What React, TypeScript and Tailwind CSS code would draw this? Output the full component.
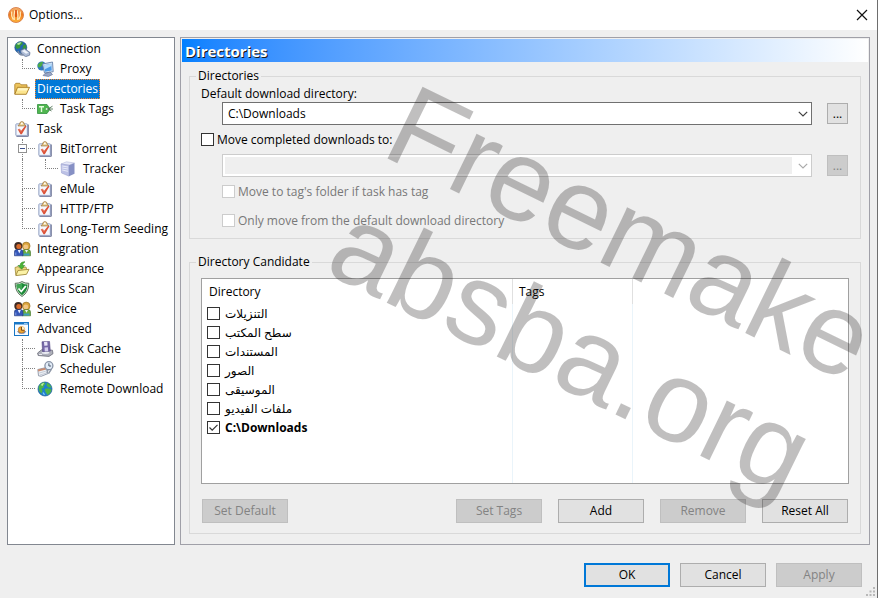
import type { ReactNode } from "react";

const FONT = "font-['Open_Sans','Noto_Sans','DejaVu_Sans',sans-serif]";

function AppLogo() {
  return (
    <svg width="16" height="16" viewBox="0 0 16 16">
      <defs>
        <linearGradient id="logo" x1="0" y1="0" x2="0" y2="1">
          <stop offset="0" stopColor="#f6b877" />
          <stop offset="0.45" stopColor="#ee7a1c" />
          <stop offset="1" stopColor="#ffb63c" />
        </linearGradient>
      </defs>
      <circle cx="8" cy="8" r="7.500" fill="url(#logo)" stroke="#d77b45" strokeWidth="0.9" />
      <path d="M3.700 4.500Q3 9 5.200 12.500M6.800 3.500Q5.500 8 6.300 13M9.200 3.500Q10.500 8 9.700 13M12.300 4.500Q13 9 10.800 12.500" fill="none" stroke="#ffe9b8" strokeWidth="1.300" />
      <path d="M8 3v7" stroke="#d9480f" strokeWidth="1.400" />
    </svg>
  );
}

function ConnectionIcon() {
  return (
    <svg width="17" height="16" viewBox="0 0 17 16">
      <circle cx="6.800" cy="6.500" r="6" fill="#2468b4" stroke="#174a80" strokeWidth="0.6" />
      <path d="M1.500 4Q4 .8 8 1L9 3 6.500 4.500 6 7 3 8 1.500 6zM9 4.500l2.500-1.500 1 3.500-2 3-2-1.500z" fill="#37983c" />
      <path d="M2.500 3Q5 .8 7.500 1.500L5 4z" fill="#b9e8a8" />
      <path d="M6.500 9.500l4-2 5.500 4-.5 2.800-4 1.400L7 12z" fill="#aebcd6" stroke="#56688e" strokeWidth="0.7" />
      <path d="M8 10l2.500-1.200 4 2.900-2.500 1z" fill="#eef3fa" />
      <path d="M4 10q1 4.500 5.500 4" fill="none" stroke="#7d8ba5" strokeWidth="1.400" />
    </svg>
  );
}

function ProxyIcon() {
  return (
    <svg width="17" height="16" viewBox="0 0 17 16">
      <circle cx="4.800" cy="5" r="4.500" fill="#2f78bd" />
      <path d="M.8 3.500Q3 .6 6 .8L5.500 4 3 6.500 1 6z" fill="#4cab44" />
      <path d="M5.500 3l10-2 .7 9.700L7.500 12z" fill="#d5e4f5" stroke="#6582ac" strokeWidth="0.9" />
      <path d="M7 4.200l7.300-1.400.4 6.700-6.700 1.200z" fill="#4d9be8" />
      <path d="M7 4.200l7.300-1.400.1 2.200-7 3.500z" fill="#b5dcfb" />
      <path d="M8 12.500l5-1.500 2.500 2.500-4 2-5.500-1z" fill="#97a6c6" stroke="#5b6c92" strokeWidth="0.6" />
    </svg>
  );
}

function FolderIcon() {
  return (
    <svg width="16" height="16" viewBox="0 0 16 16">
      <path d="M.8 13V3.500l1-1.200h4l1.200 1.500h6V7" fill="#edc45c" stroke="#a77b25" strokeWidth="0.8" />
      <path d="M.8 13.300L3.500 6.300h12l-3.200 7z" fill="#fce58e" stroke="#a77b25" strokeWidth="0.9" />
      <path d="M4.200 7.200h9.800L13 9.500H3.300z" fill="#fff6c5" />
    </svg>
  );
}

function TagIcon() {
  return (
    <svg width="17" height="16" viewBox="0 0 17 16">
      <path d="M.5 3.500h9.500L13 8l-3 4.500H.5z" fill="#4fb64f" stroke="#349040" strokeWidth="0.8" />
      <path d="M2 5.700h5M4.500 5.700V11" stroke="#e6fbe0" strokeWidth="1.400" />
      <circle cx="9.800" cy="8" r="1.100" fill="#f2fff0" />
      <path d="M9.800 8H16M11 8l4.500-2.800M11.500 8.300l3 1.700" fill="none" stroke="#55775a" strokeWidth="0.9" />
    </svg>
  );
}

function TaskIcon() {
  return (
    <svg width="16" height="16" viewBox="0 0 16 16">
      <rect x="1.800" y="2.800" width="11.700" height="12" rx="0.800" fill="#dfe7f6" stroke="#93a0c2" strokeWidth="0.9" />
      <path d="M14.300 3.500V15.300H2.500" fill="none" stroke="#5d678b" strokeWidth="0.900" />
      <rect x="3" y="5" width="9" height="8.500" fill="#f6f8fd" />
      <path d="M4 4.900L5.500 3.200q.3-2.600 2.400-2.600t2.400 2.600l1.500 1.700z" fill="#ecd191" stroke="#9c7640" strokeWidth="0.8" />
      <circle cx="7.900" cy="2.500" r="0.900" fill="#fff" />
      <path d="M3.700 8.300l2-.5 1.500 2 4-5 1.300.4-4.700 8H6.500z" fill="#dc5339" />
      <path d="M4.300 8.600l1.200-.2 1.500 2.200" fill="none" stroke="#f4a08c" strokeWidth="0.600" />
    </svg>
  );
}

function ServerIcon() {
  return (
    <svg width="16" height="16" viewBox="0 0 16 16">
      <path d="M1 3l5.500-2.200L14.500 2 9 4.200z" fill="#e6e8f8" stroke="#a9aed4" strokeWidth="0.5" />
      <path d="M1 3l8 1.200V15.200L1.500 12z" fill="#bcc1e6" stroke="#969dcd" strokeWidth="0.5" />
      <path d="M9 4.200L14.500 2v10.700L9 15.200z" fill="#8690c4" />
      <path d="M2.200 5l5.800 1M2.200 7l5.800 1M2.200 9l5.800 1.300" stroke="#edeffb" strokeWidth="0.9" />
    </svg>
  );
}

function PeopleIcon() {
  return (
    <svg width="17" height="16" viewBox="0 0 17 16">
      <circle cx="12.200" cy="5" r="3.900" fill="#d9a43c" stroke="#8f6a24" strokeWidth="0.600" />
      <circle cx="11.800" cy="6" r="2.400" fill="#f2c684" />
      <path d="M8.500 14.800V11q0-2.300 2-2.300h4q2 0 2 2.300v3.800z" fill="#6cad3f" stroke="#3f7226" strokeWidth="0.600" />
      <path d="M9.500 12.500h6v2h-6z" fill="#3d9fc0" />
      <circle cx="4.300" cy="5" r="4" fill="#3f2a22" />
      <circle cx="4.800" cy="5.600" r="2.500" fill="#d96a2b" />
      <path d="M.4 14.800V11q0-2.300 2-2.300H7q2 0 2 2.300v3.800z" fill="#3557b8" stroke="#22397d" strokeWidth="0.600" />
      <path d="M3.800 9h3l-1.500 3.500zM11 9h3l-1.500 2.800z" fill="#eef2ff" />
      <path d="M1.800 11.500v2.700" stroke="#8ba5ed" strokeWidth="0.9" />
    </svg>
  );
}

function AppearanceIcon() {
  return (
    <svg width="16" height="16" viewBox="0 0 16 16">
      <path d="M1.800 14L1 6.500l3.200-1 1.300 1.500 6.500-1 .7 2.500" fill="#ecd882" stroke="#a08a3a" strokeWidth="0.8" />
      <path d="M1.800 14.600L4 9.500l11-1.200-2.500 5z" fill="#fbf2a6" stroke="#a08a3a" strokeWidth="0.9" />
      <path d="M11 .8Q6 .8 6.200 4.500H4L7.700 8.200l3-3.700H8.500q0-2 2.500-3.700z" fill="#4bb735" stroke="#2f8623" strokeWidth="0.600" />
    </svg>
  );
}

function ShieldIcon() {
  return (
    <svg width="16" height="16" viewBox="0 0 16 16">
      <path d="M8 .6Q11 2.500 14.800 2.300 15 11 8 15.500 1 11 1.200 2.300 5 2.500 8 .6z" fill="#dfe8dd" stroke="#48644b" strokeWidth="0.9" />
      <path d="M8 2.100Q10.500 3.600 13.500 3.600 13.500 10.500 8 14.200 2.500 10.500 2.500 3.600 5.500 3.600 8 2.100z" fill="#1c8a38" />
      <path d="M8 2.100v6H3Q2.500 6 2.500 3.600 5.500 3.600 8 2.100z" fill="#3fa653" />
      <path d="M4.500 7.500l2.800 3L11.800 5" fill="none" stroke="#fff" strokeWidth="1.800" />
    </svg>
  );
}

function AdvancedIcon() {
  return (
    <svg width="16" height="16" viewBox="0 0 16 16">
      <rect x="0.500" y="1.500" width="14" height="13" fill="#f7fbff" stroke="#1976c5" />
      <path d="M1 2.500h13" stroke="#1976c5" strokeWidth="2" />
      <path d="M10 2.500h3.500" stroke="#b5ddfb" strokeWidth="0.800" />
      <path d="M3 10.500q4.500-2.500 9.300 0l-2.300 2.300H5.500z" fill="#7486a8" />
      <circle cx="7.500" cy="8.800" r="3.200" fill="#f0a835" stroke="#bb7420" strokeWidth="0.700" />
      <path d="M7.500 5.600V9h3.200q0-3-3.200-3.400z" fill="#fff0be" />
      <path d="M7.500 6v3.200h2.700" fill="none" stroke="#6b3a12" strokeWidth="0.900" />
    </svg>
  );
}

function DiskIcon() {
  return (
    <svg width="17" height="16" viewBox="0 0 17 16">
      <path d="M.6 12l4-3.200 10.800.4.600 3.500-4 2.700-10.800-.9z" fill="#aeb0ba" stroke="#6a6b78" strokeWidth="0.8" />
      <ellipse cx="8.500" cy="11.700" rx="4.200" ry="1.800" fill="#e9ebf1" stroke="#888a9b" strokeWidth="0.500" />
      <path d="M5 .8l7.500-.4.800 9.700-7.700.6z" fill="#7567a8" stroke="#52477f" strokeWidth="0.600" />
      <path d="M7 .9l3.300-.2.300 3.800-3.300.2z" fill="#e9e6f7" />
      <path d="M7.500 6.500l3.400-.2.300 3.900-3.400.2z" fill="#d5cfee" />
      <path d="M2 13.500h3" stroke="#f1f2f6" strokeWidth="0.900" />
    </svg>
  );
}

function SchedulerIcon() {
  return (
    <svg width="17" height="16" viewBox="0 0 17 16">
      <path d="M.8 8.500l7.700-1.800 2.700 5.800-7 2.800-2.700-.5z" fill="#eceff4" stroke="#8b94a5" strokeWidth="0.900" />
      <path d="M.8 8.500l7.700-1.800.8 1.800-8 2z" fill="#c98b70" />
      <path d="M2.300 12l6.500-1.800M3 14l6.500-2" stroke="#bac2cf" strokeWidth="0.800" />
      <path d="M11 8.500l-1 3.700M14.500 8l-3 4.700" stroke="#9099a8" strokeWidth="1.400" />
      <circle cx="11.900" cy="4.700" r="4" fill="#e3edf8" stroke="#8792a5" strokeWidth="1.300" />
      <path d="M11.900 2.300V5h2.200" fill="none" stroke="#4b576b" strokeWidth="1" />
    </svg>
  );
}

function GlobeIcon() {
  return (
    <svg width="16" height="16" viewBox="0 0 16 16">
      <circle cx="8" cy="8" r="7" fill="#1f80cf" stroke="#1a578c" strokeWidth="0.700" />
      <path d="M1.700 6Q3 2 7 1.300L8.700 2.800 6.500 5 7 6.500 4.500 7.500 5.500 10 4.500 12.500Q1.500 10.500 1.700 6zM10 1.800Q13.500 3 14.500 6.500L11.500 6.500 9.500 4.500zM7.700 8l3.300-.8 3.500 1.300Q14 12 10.500 14L8.500 11z" fill="#4fb548" />
      <path d="M3.700 4Q5 2 7.200 1.800L5.500 5z" fill="#c4eca3" />
      <path d="M6 11.500l1.500 2.300" stroke="#83cdf5" strokeWidth="1.200" />
    </svg>
  );
}

type TreeNode = {
  label: string;
  icon: () => ReactNode;
  children?: TreeNode[];
};

const tree: TreeNode[] = [
  { label: "Connection", icon: ConnectionIcon, children: [{ label: "Proxy", icon: ProxyIcon }] },
  { label: "Directories", icon: FolderIcon, children: [{ label: "Task Tags", icon: TagIcon }] },
  {
    label: "Task",
    icon: TaskIcon,
    children: [
      { label: "BitTorrent", icon: TaskIcon, children: [{ label: "Tracker", icon: ServerIcon }] },
      { label: "eMule", icon: TaskIcon },
      { label: "HTTP/FTP", icon: TaskIcon },
      { label: "Long-Term Seeding", icon: TaskIcon },
    ],
  },
  { label: "Integration", icon: PeopleIcon },
  { label: "Appearance", icon: AppearanceIcon },
  { label: "Virus Scan", icon: ShieldIcon },
  { label: "Service", icon: PeopleIcon },
  {
    label: "Advanced",
    icon: AdvancedIcon,
    children: [
      { label: "Disk Cache", icon: DiskIcon },
      { label: "Scheduler", icon: SchedulerIcon },
      { label: "Remote Download", icon: GlobeIcon },
    ],
  },
];

const directories = [
  { name: "التنزيلات" },
  { name: "سطح المكتب" },
  { name: "المستندات" },
  { name: "الصور" },
  { name: "الموسيقى" },
  { name: "ملفات الفيديو" },
  { name: "C:\\Downloads", checked: true },
];

function Branch({ last, expandable }: { last: boolean; expandable: boolean }) {
  return (
    <span className="relative flex h-5 w-[23px] shrink-0 flex-col pl-2">
      <span className="h-[10px] w-[13px] border-b border-l border-dotted border-[#808080]" />
      {!last && <span className="h-[10px] border-l border-dotted border-[#808080]" />}
      {expandable && (
        <button
          aria-label="Collapse"
          className="absolute left-1 top-[5px] flex h-[9px] w-[9px] items-center justify-center border border-[#919191] bg-white"
        >
          <span className="h-px w-[5px] bg-[#3c4f8a]" />
        </button>
      )}
    </span>
  );
}

function TreeItem({ node, last, level, continued }: { node: TreeNode; last: boolean; level: number; continued?: boolean }) {
  const Icon = node.icon;
  const selected = node.label === "Directories";
  return (
    <li>
      <div className="flex h-5 items-center">
        {level === 2 && (
          <span className="flex h-5 w-[23px] shrink-0 pl-2">
            {continued && <span className="border-l border-dotted border-[#808080]" />}
          </span>
        )}
        {level > 0 && <Branch last={last} expandable={level === 1 && !!node.children} />}
        <span className="flex w-[21px] shrink-0">
          <Icon />
        </span>
        <button
          className={
            selected
              ? "h-5 whitespace-nowrap border border-dotted border-[#ff8728] bg-[#0078d7] px-px leading-[18px] text-white"
              : "h-5 whitespace-nowrap px-[2px] leading-5"
          }
        >
          {node.label}
        </button>
      </div>
      {node.children && (
        <ul>
          {node.children.map((child, i) => (
            <TreeItem
              key={child.label}
              node={child}
              level={level + 1}
              last={i === node.children!.length - 1}
              continued={!last}
            />
          ))}
        </ul>
      )}
    </li>
  );
}

function CheckBox({ checked, disabled, label }: { checked?: boolean; disabled?: boolean; label: ReactNode }) {
  return (
    <label className={`flex items-center ${disabled ? "text-[#787878]" : ""}`}>
      <span className="relative flex">
        <input
          type="checkbox"
          defaultChecked={checked}
          disabled={disabled}
          className="peer h-[13px] w-[13px] appearance-none border border-[#333] bg-white disabled:border-[#ccc]"
        />
        <svg width="13" height="13" viewBox="0 0 13 13" className="pointer-events-none absolute inset-0 hidden peer-checked:block">
          <path d="M2.500 6.500l2.700 2.700 5.300-5.400" fill="none" stroke="#333" strokeWidth="1.200" />
        </svg>
      </span>
      {label}
    </label>
  );
}

function DirectorySelect({ id, label, value, disabled }: { id: string; label: string; value: string; disabled?: boolean }) {
  return (
    <div className="ml-[21px] flex items-center gap-[15px] pr-px">
      <div className={`relative flex h-[23px] min-w-0 flex-1 border bg-white ${disabled ? "border-[#ccc]" : "border-[#707070]"}`}>
        <select
          id={id}
          aria-label={label}
          disabled={disabled}
          defaultValue={value}
          className="w-full appearance-none py-[2px] pl-[2px] pr-[19px] indent-[3px] leading-4 opacity-100 disabled:bg-[#efefef] disabled:bg-clip-content"
        >
          <option>{value}</option>
        </select>
        <svg width="10" height="6" viewBox="0 0 10 6" className="pointer-events-none absolute right-[3px] top-[8px]">
          <path d="M.8 .8L5 5 9.200 .8" fill="none" stroke={disabled ? "#aaa" : "#404040"} strokeWidth="1.200" />
        </svg>
      </div>
      <Button label="..." width="w-[21px]" height="h-[21px]" disabled={disabled} />
    </div>
  );
}

function Button({
  label,
  disabled,
  primary,
  width = "w-[86px]",
  height = "h-6",
}: {
  label: string;
  disabled?: boolean;
  primary?: boolean;
  width?: string;
  height?: string;
}) {
  return (
    <button
      disabled={disabled}
      className={`flex shrink-0 items-center justify-center bg-[#e1e1e1] leading-5 disabled:border-[#bfbfbf] disabled:bg-[#ccc] disabled:text-[#838383] ${
        primary ? "border-2 border-[#0078d7]" : "border border-[#adadad]"
      } ${width} ${height}`}
    >
      {label}
    </button>
  );
}

function DirectoryTable() {
  return (
    <div className="flex min-h-[206px] flex-1 border border-[#a0a0a0] bg-white">
      <table className="w-full table-fixed border-separate border-spacing-0">
        <colgroup>
          <col className="w-[311px]" />
          <col className="w-[120px]" />
          <col />
        </colgroup>
        <thead>
          <tr className="h-[25px] text-left">
            <th className="border-r border-[#e0e0e0] pl-[7px] font-normal">Directory</th>
            <th className="border-r border-[#e0e0e0] pl-[6px] font-normal">Tags</th>
            <th />
          </tr>
        </thead>
        <tbody>
          {directories.map((dir) => (
            <tr key={dir.name} className="h-[19px]">
              <td className="border-r border-[#eaf4fa] p-0 pl-[5px] leading-[19px]">
                <CheckBox
                  checked={dir.checked}
                  label={<span className={dir.checked ? "h-[19px] pl-[5px] font-bold" : "h-[19px] pl-[5px]"}>{dir.name}</span>}
                />
              </td>
              <td className="border-r border-[#eaf4fa]" />
              <td />
            </tr>
          ))}
          <tr>
            <td className="border-r border-[#eaf4fa]" />
            <td className="border-r border-[#eaf4fa]" />
            <td />
          </tr>
        </tbody>
      </table>
    </div>
  );
}

function Watermark() {
  return (
    <div className="pointer-events-none absolute left-[425px] top-[60px] origin-top-left rotate-[26deg] select-none whitespace-nowrap font-['Liberation_Sans',Arial,sans-serif] text-[116px] leading-[130px] text-[#1e1919]/28">
      Freemake
      <br />
      absba.org
    </div>
  );
}

export default function App() {
  return (
    <div className={`relative flex min-h-screen flex-col overflow-hidden border-r border-[#6e6e6e] bg-[#efefef] text-[12px] text-black ${FONT}`}>
      <header className="flex h-[30px] items-center bg-white pl-2 pr-[9px]">
        <AppLogo />
        <h1 className="flex-1 pl-[5px]">Options...</h1>
        <button aria-label="Close">
          <svg width="12" height="12" viewBox="0 0 12 12">
            <path d="M1 1l10 10M11 1L1 11" stroke="#111" strokeWidth="1.200" />
          </svg>
        </button>
      </header>

      <main className="flex flex-1 gap-[5px] px-[7px] pt-[7px]">
        <nav className="w-[168px] shrink-0 border border-[#828790] bg-white pl-[6px] pt-px">
          <ul>
            {tree.map((node, i) => (
              <TreeItem key={node.label} node={node} level={0} last={i === tree.length - 1} />
            ))}
          </ul>
        </nav>

        <section className="flex min-w-0 flex-1 flex-col border border-[#a0a0a8] p-px">
          <h2 className="h-[23px] bg-linear-to-r from-[#0080ff] to-white pl-[3px] text-[15px] font-bold leading-6 text-white [text-shadow:1px_1px_0_#1a1a1a]">
            Directories
          </h2>
          <div className="flex flex-1 flex-col gap-[15px] px-[7px] pb-[9px] pt-[6px]">
            <fieldset className="min-w-0 border border-[#d9d9d9] px-[11px] pb-[3px]">
              <legend className="-ml-[5px] px-[2px] leading-4">Directories</legend>
              <label htmlFor="default-dir" className="block h-[18px] leading-5">
                Default download directory:
              </label>
              <DirectorySelect id="default-dir" label="Default download directory" value="C:\Downloads" />
              <div className="flex h-[29px] items-center">
                <CheckBox label={<span className="pl-[3px]">Move completed downloads to:</span>} />
              </div>
              <DirectorySelect id="move-dir" label="Move completed downloads to" value="" disabled />
              <div className="ml-[21px] flex h-[29px] items-center">
                <CheckBox disabled label={<span className="pl-[3px]">Move to tag's folder if task has tag</span>} />
              </div>
              <div className="ml-[21px] flex h-[29px] items-center">
                <CheckBox disabled label={<span className="pl-[3px]">Only move from the default download directory</span>} />
              </div>
            </fieldset>

            <fieldset className="flex min-w-0 flex-1 flex-col border border-[#d9d9d9] px-[11px] pb-[10px] pt-2">
              <legend className="-ml-[5px] px-[2px] leading-4">Directory Candidate</legend>
              <DirectoryTable />
              <div className="mt-[15px] flex gap-4 px-px">
                <div className="flex-1">
                  <Button label="Set Default" disabled />
                </div>
                <Button label="Set Tags" disabled />
                <Button label="Add" />
                <Button label="Remove" disabled />
                <Button label="Reset All" />
              </div>
            </fieldset>
          </div>
        </section>
      </main>

      <footer className="flex justify-end gap-[10px] pb-[11px] pr-[15px] pt-[18px]">
        <Button label="OK" primary />
        <Button label="Cancel" />
        <Button label="Apply" disabled />
      </footer>

      <svg width="10" height="10" viewBox="0 0 10 10" className="absolute bottom-px right-px" fill="#b8b8b8">
        <path d="M7 0h2v2H7zM7 3.500h2v2H7zM7 7h2v2H7zM3.500 3.500h2v2h-2zM3.500 7h2v2h-2zM0 7h2v2H0z" />
      </svg>
      <Watermark />
    </div>
  );
}
